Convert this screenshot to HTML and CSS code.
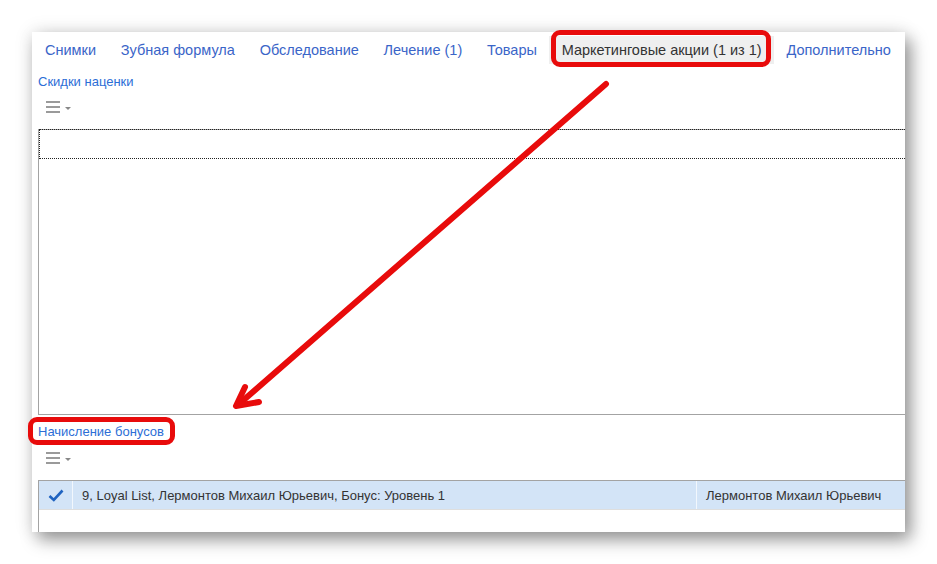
FILE: index.html
```html
<!DOCTYPE html>
<html lang="ru">
<head>
  <meta charset="UTF-8" />
  <title>Маркетинговые акции</title>
  <link rel="stylesheet" href="styles.css">
</head>
<body>
  <div class="page">
    <div class="panel">
      <div class="tabs">
        <span class="tab">Снимки</span>
        <span class="tab">Зубная формула</span>
        <span class="tab">Обследование</span>
        <span class="tab">Лечение (1)</span>
        <span class="tab">Товары</span>
        <span class="tab active">Маркетинговые акции (1 из 1)</span>
        <span class="tab">Дополнительно</span>
      </div>

      <div class="group-title">Скидки наценки</div>
      <div class="toolbar">
        <span class="menu-icon"><i></i><i></i><i></i></span>
        <span class="menu-caret"></span>
      </div>
      <div class="grid grid-discounts">
        <div class="empty-row"></div>
      </div>

      <div class="group-title second">Начисление бонусов</div>
      <div class="toolbar second">
        <span class="menu-icon"><i></i><i></i><i></i></span>
        <span class="menu-caret"></span>
      </div>
      <div class="grid grid-bonus">
        <div class="row selected">
          <div class="cell cell-check">
            <svg width="16" height="13" viewBox="0 0 16 13"><path d="M1.5 7 L5.8 11 L14.5 1.5" fill="none" stroke="#1f63c0" stroke-width="2.6"/></svg>
          </div>
          <div class="cell cell-name">9, Loyal List, Лермонтов Михаил Юрьевич, Бонус: Уровень 1</div>
          <div class="cell cell-client">Лермонтов Михаил Юрьевич</div>
        </div>
      </div>
    </div>

    <!-- пометки поверх формы -->
    <div class="mark mark-tab"></div>
    <div class="mark mark-title"></div>
    <svg class="arrow" width="937" height="564" viewBox="0 0 937 564">
      <line x1="606" y1="84" x2="239" y2="404" stroke="#e80b0b" stroke-width="6" stroke-linecap="round"/>
      <polyline points="245,387 236,406 259,402" fill="none" stroke="#e80b0b" stroke-width="6" stroke-linecap="round" stroke-linejoin="round"/>
    </svg>
  </div>
</body>
</html>
```

FILE: styles.css
```css
body {
  margin: 0;
  background: #fff;
  font-family: "Liberation Sans", Arial, sans-serif;
}

.page {
  position: relative;
  width: 937px;
  height: 564px;
  padding: 32px 0 0 32px;
  box-sizing: border-box;
}

.panel {
  width: 873px;
  height: 500px;
  background: #fff;
  overflow: hidden;
  box-shadow: 0 0 18px rgba(0, 0, 0, 0.12), 6px 8px 16px rgba(0, 0, 0, 0.38);
}

.tabs {
  display: flex;
  padding: 4px 0 0 0.6px;
  white-space: nowrap;
}

.tab {
  padding: 0 12.4px;
  line-height: 28px;
  font-size: 14.5px;
  color: #3a65c8;
}

.tab.active {
  background: #efefef;
  color: #333;
}

.group-title {
  margin: 10px 0 0 6px;
  font-size: 13px;
  line-height: 16px;
  color: #2c6ed6;
}

.group-title.second {
  margin-top: 9px;
}

.toolbar {
  display: flex;
  align-items: flex-start;
  height: 39px;
  padding: 11px 0 0 14px;
  box-sizing: border-box;
}

.toolbar.second {
  height: 40px;
  padding-top: 12px;
}

.menu-icon {
  display: flex;
  flex-direction: column;
  gap: 3px;
  width: 14px;
}

.menu-icon i {
  display: block;
  height: 2px;
  background: #9a9a9a;
}

.menu-caret {
  margin: 6px 0 0 5px;
  border-left: 3px solid transparent;
  border-right: 3px solid transparent;
  border-top: 3px solid #888;
}

.grid {
  margin-left: 6px;
  border-left: 1px solid #a3a3a3;
  box-sizing: border-box;
}

.grid-discounts {
  height: 286px;
  border-top: 1px solid #a3a3a3;
  border-bottom: 1px solid #a3a3a3;
}

.empty-row {
  height: 30px;
  border-top: 1px dotted #222;
  border-bottom: 1px dotted #222;
  border-left: 1px dotted #222;
  margin-top: -1px;
  box-sizing: border-box;
}

.grid-bonus {
  height: 60px;
  border-top: 1px solid #a3a3a3;
}

.row {
  display: flex;
  height: 29px;
  border-bottom: 1px solid #dedede;
  box-sizing: border-box;
  font-size: 13px;
  color: #333;
}

.row.selected {
  background: #d3e4f7;
}

.cell {
  display: flex;
  align-items: center;
  box-sizing: border-box;
  white-space: nowrap;
}

.cell-check {
  width: 34px;
  justify-content: center;
  border-right: 1px solid #f2f7fd;
}

.cell-name {
  width: 624px;
  padding-left: 9px;
  border-right: 1px solid #f2f7fd;
}

.cell-client {
  padding-left: 9px;
  flex: 1;
}

.mark {
  position: absolute;
  border: 5px solid #e80b0b;
  border-radius: 9px;
  box-sizing: border-box;
}

.mark-tab {
  left: 551px;
  top: 30px;
  width: 220px;
  height: 37px;
}

.mark-title {
  left: 28px;
  top: 417px;
  width: 147px;
  height: 28px;
}

.arrow {
  position: absolute;
  left: 0;
  top: 0;
}
```
